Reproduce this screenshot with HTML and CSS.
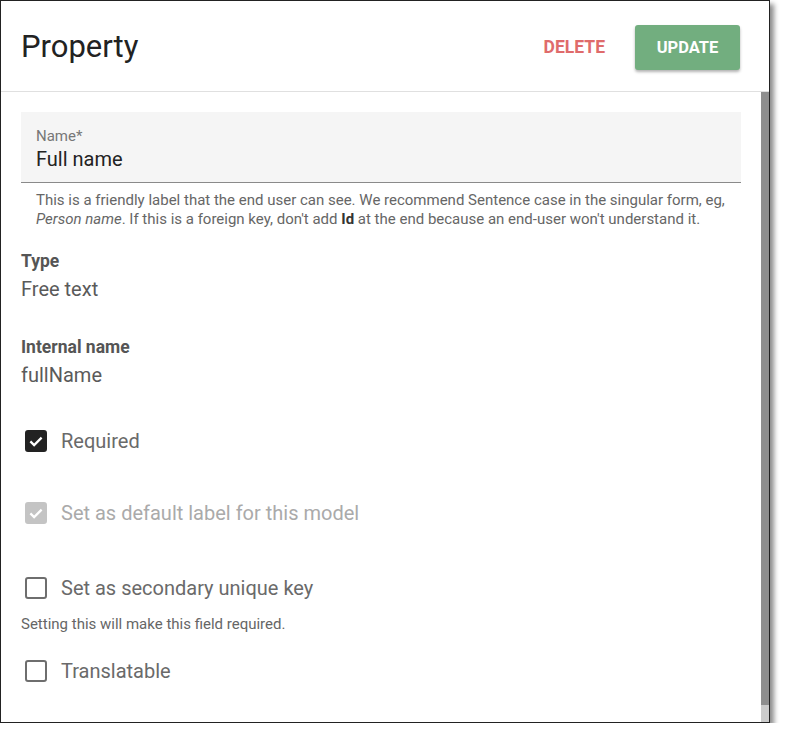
FILE: index.html
```html
<!DOCTYPE html>
<html lang="en">
<head>
  <meta charset="UTF-8" />
  <title>Property</title>
  <link rel="stylesheet" href="styles.css">
</head>
<body>
  <div class="dialog">
    <header class="dialog-header">
      <h1>Property</h1>
      <div class="actions">
        <button class="btn-delete">DELETE</button>
        <button class="btn-update">UPDATE</button>
      </div>
    </header>

    <div class="dialog-body">
      <div class="content">
        <div class="text-field">
          <label>Name*</label>
          <div class="value">Full name</div>
        </div>
        <p class="field-help">This is a friendly label that the end user can see. We recommend Sentence case in the singular form, eg, <em>Person name</em>. If this is a foreign key, don't add <b>Id</b> at the end because an end-user won't understand it.</p>

        <div class="info">
          <div class="info-label">Type</div>
          <div class="info-value">Free text</div>
        </div>
        <div class="info">
          <div class="info-label">Internal name</div>
          <div class="info-value">fullName</div>
        </div>

        <div class="check checked">
          <span class="box"><svg viewBox="0 0 24 24"><path d="M4.5 12.5l5 5 10-10" /></svg></span>
          <span class="check-label">Required</span>
        </div>
        <div class="check checked disabled">
          <span class="box"><svg viewBox="0 0 24 24"><path d="M4.5 12.5l5 5 10-10" /></svg></span>
          <span class="check-label">Set as default label for this model</span>
        </div>
        <div class="check secondary">
          <span class="box"></span>
          <span class="check-label">Set as secondary unique key</span>
        </div>
        <p class="check-help">Setting this will make this field required.</p>
        <div class="check last">
          <span class="box"></span>
          <span class="check-label">Translatable</span>
        </div>
      </div>
      <div class="scrollbar"><div class="thumb"></div></div>
    </div>
  </div>
</body>
</html>
```

FILE: styles.css
```css
body {
  margin: 0;
  background: #fff;
  font-family: Roboto, 'Liberation Sans', sans-serif;
  color: #555;
}

.dialog {
  width: 770px;
  height: 723px;
  box-sizing: border-box;
  border: 1px solid #222;
  background: #fff;
  display: flex;
  flex-direction: column;
  box-shadow: 4px 4px 5px rgba(0, 0, 0, 0.45);
}

.dialog-header {
  height: 90px;
  flex-shrink: 0;
  display: flex;
  align-items: center;
  justify-content: space-between;
  padding: 0 29px 0 20px;
  border-bottom: 1px solid #e0e0e0;
}

.dialog-header h1 {
  margin: 0;
  font-size: 31px;
  font-weight: 400;
  color: #222;
}

.actions {
  display: flex;
  align-items: center;
  gap: 14px;
  margin-top: 2px;
}

.actions button {
  font-family: inherit;
  font-size: 16.5px;
  font-weight: 700;
  border: none;
  cursor: pointer;
  background: none;
}

.btn-delete {
  color: #df6b6b;
  font-size: 17.5px !important;
  padding: 10px 16px;
}

.btn-update {
  background: #72ae7f !important;
  color: #fff;
  width: 105px;
  height: 45px;
  border-radius: 3px;
  box-shadow: 0 2px 3px rgba(0, 0, 0, 0.3);
}

.dialog-body {
  flex: 1;
  display: flex;
  min-height: 0;
}

.content {
  flex: 1;
  padding: 20px 20px 0 20px;
}

.scrollbar {
  width: 8px;
  background: #cbcbcb;
  display: flex;
  flex-direction: column;
}

.scrollbar .thumb {
  height: 613px;
  background: #8e8e8e;
}

.text-field {
  background: #f5f5f5;
  border-bottom: 1px solid #8a8a8a;
  height: 71px;
  padding: 16px 15px 0;
  box-sizing: border-box;
}

.text-field label {
  display: block;
  font-size: 15px;
  color: #777;
  line-height: 17px;
}

.text-field .value {
  font-size: 20px;
  color: #222;
  line-height: 26px;
  margin-top: 1px;
}

.field-help {
  margin: 8px 0 0 15px;
  font-size: 15px;
  line-height: 19px;
  color: #666;
}

.field-help b {
  color: #333;
}

.info {
  margin-top: 21px;
}

.info + .info {
  margin-top: 34px;
}

.info-label {
  font-size: 17.5px;
  font-weight: 700;
  color: #555;
  line-height: 22px;
}

.info-value {
  font-size: 20px;
  line-height: 26px;
  margin-top: 4px;
  color: #5a5a5a;
}

.check {
  display: flex;
  align-items: center;
  height: 30px;
  margin-top: 38px;
}

.check + .check {
  margin-top: 42px;
}

.check.secondary {
  margin-top: 45px;
}

.check .box {
  width: 18px;
  height: 18px;
  margin-left: 4px;
  margin-right: 14px;
  border: 2px solid #6e6e6e;
  border-radius: 3px;
  display: flex;
}

.check.checked .box {
  background: #222;
  border-color: #222;
}

.check.disabled .box {
  background: #c4c4c4;
  border-color: #c4c4c4;
}

.check .box svg {
  width: 18px;
  height: 18px;
  fill: none;
  stroke: #fff;
  stroke-width: 3;
}

.check-label {
  font-size: 20px;
  color: #6a6a6a;
}

.check.disabled .check-label {
  color: #aaa;
}

.check-help {
  margin: 12px 0 0;
  font-size: 15px;
  color: #666;
}

.check.last {
  margin-top: 23px;
}
```
